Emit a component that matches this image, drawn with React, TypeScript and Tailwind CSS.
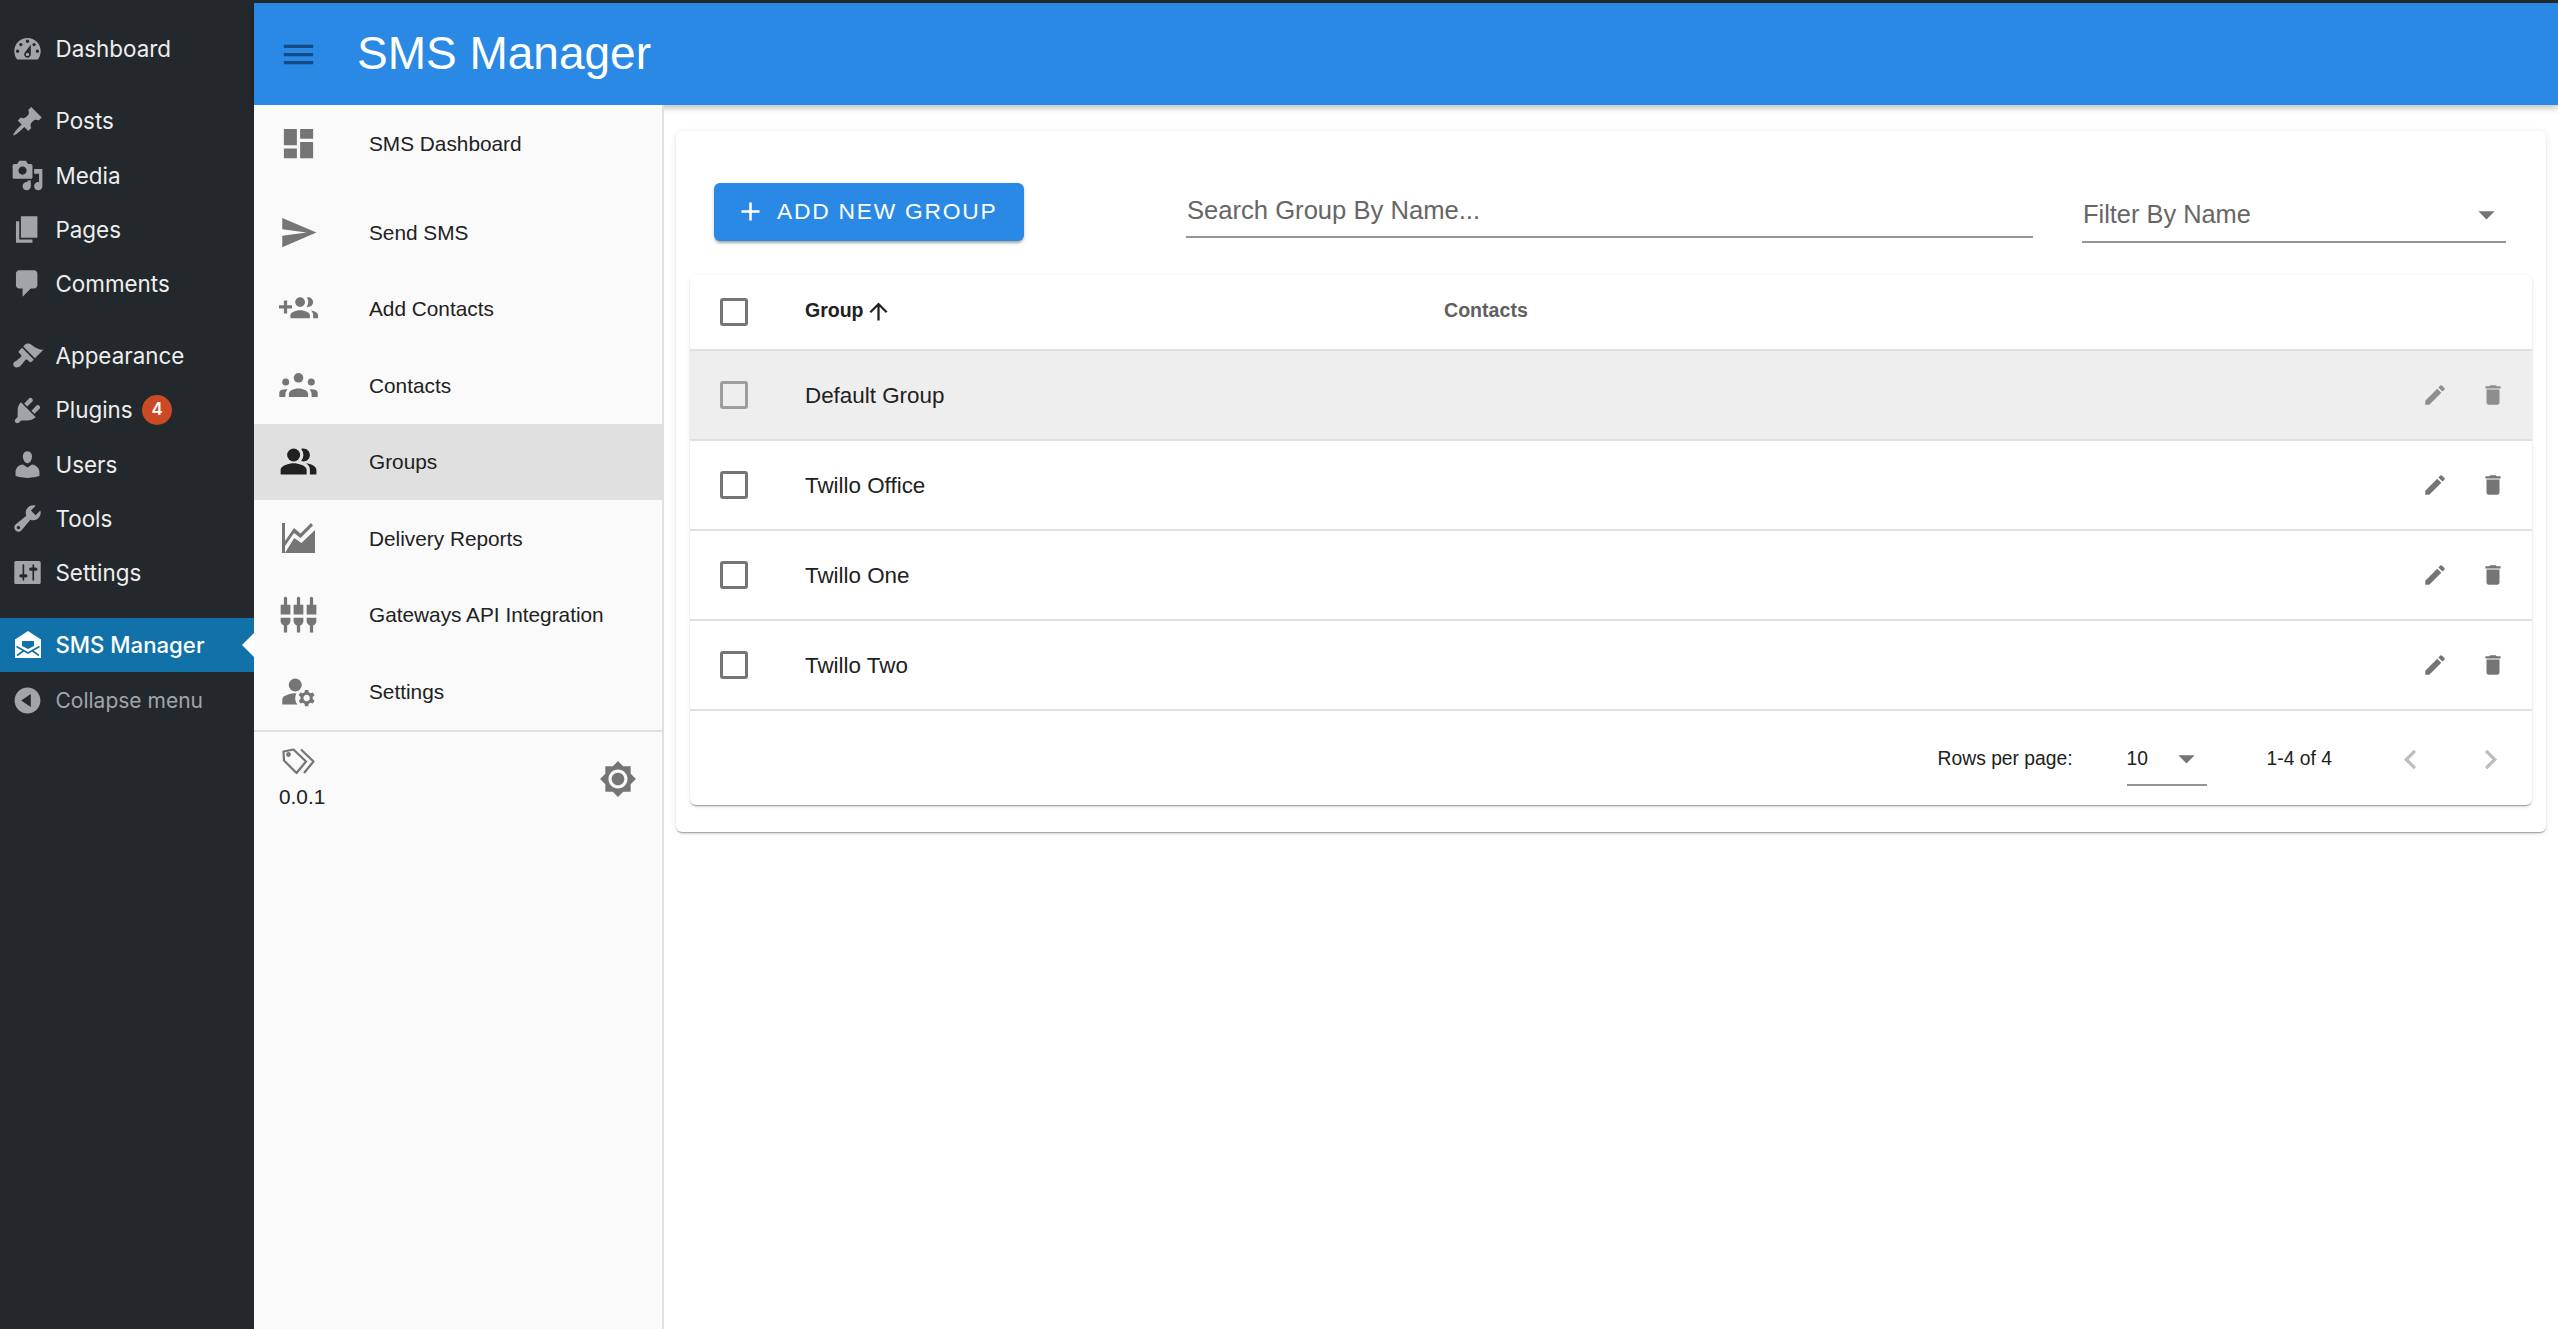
import {
  MdAdd,
  MdArrowDropDown,
  MdArrowUpward,
  MdBrightness7,
  MdChevronLeft,
  MdChevronRight,
  MdDashboard,
  MdDelete,
  MdEdit,
  MdManageAccounts,
  MdMenu,
  MdPeopleAlt,
  MdSend,
  MdSettingsInputComponent,
} from "react-icons/md";

const dashicons = {
  dashboard:
    "M3.76 16h12.48c1.1-1.37 1.76-3.11 1.76-5 0-4.42-3.58-8-8-8s-8 3.58-8 8c0 1.89.66 3.63 1.76 5zM10 4c.55 0 1 .45 1 1s-.45 1-1 1-1-.45-1-1 .45-1 1-1zM6 6c.55 0 1 .45 1 1s-.45 1-1 1-1-.45-1-1 .45-1 1-1zm8 0c.55 0 1 .45 1 1s-.45 1-1 1-1-.45-1-1 .45-1 1-1zm-5.37 5.55L12 7v6c0 1.1-.9 2-2 2s-2-.9-2-2c0-.57.24-1.08.63-1.45zM4 10c.55 0 1 .45 1 1s-.45 1-1 1-1-.45-1-1 .45-1 1-1zm12 0c.55 0 1 .45 1 1s-.45 1-1 1-1-.45-1-1 .45-1 1-1zm-5 3c0-.55-.45-1-1-1s-1 .45-1 1 .45 1 1 1 1-.45 1-1z",
  posts:
    "M10.44 3.02l1.82-1.82 6.36 6.35-1.83 1.82c-1.05-.68-2.48-.57-3.41.36l-.75.75c-.92.93-1.04 2.35-.35 3.41l-1.83 1.82-2.41-2.41-2.8 2.79c-.42.42-3.38 2.71-3.8 2.29s1.86-3.39 2.28-3.81l2.79-2.79L4.1 9.36l1.83-1.82c1.05.69 2.48.57 3.4-.36l.75-.75c.93-.92 1.05-2.35.36-3.41z",
  media:
    "M13 11V4c0-.55-.45-1-1-1h-1.67L9 1H5L3.67 3H2c-.55 0-1 .45-1 1v7c0 .55.45 1 1 1h10c.55 0 1-.45 1-1zM7 4.5c1.38 0 2.5 1.12 2.5 2.5S8.38 9.5 7 9.5 4.5 8.38 4.5 7 5.62 4.5 7 4.5zM14 6h5v10.5c0 1.38-1.12 2.5-2.5 2.5S14 17.88 14 16.5s1.12-2.5 2.5-2.5c.17 0 .34.02.5.05V9h-3V6zm-4 8.05V13h2v3.5c0 1.38-1.12 2.5-2.5 2.5S7 17.88 7 16.5 8.12 14 9.5 14c.17 0 .34.02.5.05z",
  pages: "M6 15V2h10v13H6zm-1 1h8v2H3V5h2v11z",
  comments:
    "M5 2h9c1.1 0 2 .9 2 2v7c0 1.1-.9 2-2 2h-2l-5 5v-5H5c-1.1 0-2-.9-2-2V4c0-1.1.9-2 2-2z",
  appearance:
    "M14.48 11.06L7.41 3.99l1.5-1.5c.5-.56 2.3-.47 3.51.32 1.21.8 1.43 1.28 2.91 2.1 1.18.64 2.45 1.26 4.45.85zm-.71.71L6.7 4.7 4.93 6.47c-.39.39-.39 1.02 0 1.41l1.06 1.06c.39.39.39 1.03 0 1.42-.6.6-1.43 1.11-2.21 1.69-.35.26-.7.53-1.01.84C1.43 13.23.91 15.04 1.96 16.09c1.05 1.05 2.86.53 4.2-.81.31-.31.58-.66.84-1.01.58-.78 1.09-1.61 1.69-2.21.39-.39 1.03-.39 1.42 0l1.06 1.06c.39.39 1.02.39 1.41 0z",
  plugins:
    "M13.11 4.36L9.87 7.6 8 5.73l3.24-3.24c.35-.34 1.05-.2 1.56.32.52.51.66 1.21.31 1.55zm-8 1.77l.91-1.12 9.01 9.01-1.19.84c-.71.71-2.63 1.16-3.82 1.16H6.14L4.9 17.26c-.59.59-1.54.59-2.12 0-.59-.58-.59-1.53 0-2.12l1.24-1.24v-3.88c0-1.13.4-3.19 1.09-3.89zm7.26 3.97l3.24-3.24c.34-.35 1.04-.21 1.55.31.52.51.66 1.21.31 1.55l-3.24 3.25z",
  users:
    "M10 9.25c-2.27 0-2.73-3.44-2.73-3.44C7 4.02 7.82 2 9.97 2c2.16 0 2.98 2.02 2.71 3.81 0 0-.41 3.44-2.68 3.44zm0 2.57L12.72 10c2.39 0 4.52 2.33 4.52 4.53v2.49s-3.65 1.13-7.24 1.13c-3.65 0-7.24-1.13-7.24-1.13v-2.49c0-2.25 1.94-4.48 4.47-4.48z",
  tools:
    "M16.68 9.77c-1.34 1.34-3.3 1.67-4.95.99l-5.41 6.52c-.99.99-2.59.99-3.58 0s-.99-2.59 0-3.57l6.52-5.42c-.68-1.65-.35-3.61.99-4.95 1.28-1.28 3.12-1.62 4.72-1.06l-2.89 2.89 2.82 2.82 2.86-2.87c.53 1.58.18 3.39-1.08 4.65zM3.81 16.21c.4.39 1.04.39 1.43 0 .4-.4.4-1.04 0-1.43-.39-.4-1.03-.4-1.43 0-.39.39-.39 1.03 0 1.43z",
  settings:
    "M18 16V4c0-.55-.45-1-1-1H3c-.55 0-1 .45-1 1v12c0 .55.45 1 1 1h14c.55 0 1-.45 1-1zM8 11h1c.55 0 1 .45 1 1s-.45 1-1 1H8v1.5c0 .28-.22.5-.5.5s-.5-.22-.5-.5V13H6c-.55 0-1-.45-1-1s.45-1 1-1h1V5.5c0-.28.22-.5.5-.5s.5.22.5.5V11zm5-2h-1c-.55 0-1-.45-1-1s.45-1 1-1h1V5.5c0-.28.22-.5.5-.5s.5.22.5.5V7h1c.55 0 1 .45 1 1s-.45 1-1 1h-1v5.5c0 .28-.22.5-.5.5s-.5-.22-.5-.5V9z",
  collapse:
    "M10 2.16c4.33 0 7.84 3.51 7.84 7.84s-3.51 7.84-7.84 7.84S2.16 14.33 2.16 10 5.71 2.16 10 2.16zm2 11.72V6.12L6.18 9.97z",
};

const Dashicon = ({ d }: { d: string }) => (
  <svg viewBox="0 0 20 20" className="w-[33px] h-[33px] fill-current shrink-0">
    <path d={d} />
  </svg>
);

const EnvelopeIcon = () => (
  <svg viewBox="0 0 26 27" className="w-[26px] h-[27px] mx-[3.5px] shrink-0">
    <path d="M13 0L26 8.5V27H0V8.5z" fill="#fff" />
    <path d="M7 10H19V15L13 18L7 15z" fill="#1072a8" />
    <path d="M1.5 15.5L13 22L24.5 15.5M2 24.5L9 19.5M24 24.5L17 19.5" stroke="#1072a8" strokeWidth="1.6" fill="none" />
  </svg>
);

const DeliveryIcon = () => (
  <svg viewBox="0 0 33 30" className="w-[33px] h-[30px] fill-current">
    <path d="M0 0H3V30H0z" />
    <path d="M3 18L12 5L18.5 10.5L29 0L31 2.5L18.5 15L12 10L3 23z" />
    <path d="M3 30L12.2 15L19.5 20L33 7V30z" />
  </svg>
);

const AddContactsIcon = () => (
  <svg viewBox="0 0 24 24" className="w-[39px] h-[39px] fill-current">
    <path d="M8 10H5V7H3v3H0v2h3v3h2v-3h3v-2zm10 1c1.66 0 2.99-1.34 2.99-3S19.66 5 18 5c-.32 0-.63.05-.91.14.57.81.9 1.79.9 2.86s-.34 2.04-.9 2.86c.28.09.59.14.91.14zm-5 0c1.66 0 2.99-1.34 2.99-3S14.66 5 13 5s-3 1.34-3 3 1.34 3 3 3zm6.62 2.16c.83.73 1.38 1.66 1.38 2.84v2h3v-2c0-1.54-2.37-2.49-4.38-2.84zM13 13c-2 0-6 1-6 3v2h12v-2c0-2-4-3-6-3z" />
  </svg>
);

const ContactsIcon = () => (
  <svg viewBox="0 0 24 15" className="w-[39px] h-[24px] fill-current">
    <circle cx="12" cy="3" r="3" />
    <circle cx="4" cy="5.6" r="2.2" />
    <circle cx="20" cy="5.6" r="2.2" />
    <path d="M6 15v-1.6c0-1.2.7-2.3 1.8-2.7C9 10.1 10.4 9.7 12 9.7s3 .4 4.2 1c1.1.4 1.8 1.5 1.8 2.7V15z" />
    <path d="M5.1 10.2c-.4-.1-.7-.1-1.1-.1-1 0-1.9.2-2.8.6C.5 11 0 11.7 0 12.5V15h3.8v-2c0-.8.9-2.1 1.3-2.8z" />
    <path d="M18.9 10.2c.4-.1.7-.1 1.1-.1 1 0 1.9.2 2.8.6.7.3 1.2 1 1.2 1.8V15h-3.8v-2c0-.8-.9-2.1-1.3-2.8z" />
  </svg>
);

const TagsIcon = () => (
  <svg
    viewBox="0 0 33 27"
    className="w-[33px] h-[27px] ml-[4px]"
    fill="none"
    stroke="#757575"
    strokeWidth="2.2"
    strokeLinejoin="round"
  >
    <path d="M1.5 3.5L11.5 1.5L24 13.5L14.5 25L2 12.5z" />
    <path d="M19 1.5L31.5 13.5L22 25" />
    <circle cx="6.5" cy="6.5" r="1.3" />
  </svg>
);

const wpTop = [
  { label: "Posts", icon: dashicons.posts },
  { label: "Media", icon: dashicons.media },
  { label: "Pages", icon: dashicons.pages },
  { label: "Comments", icon: dashicons.comments },
];

const wpMid = [
  { label: "Appearance", icon: dashicons.appearance },
  { label: "Plugins", icon: dashicons.plugins, badge: 4 },
  { label: "Users", icon: dashicons.users },
  { label: "Tools", icon: dashicons.tools },
  { label: "Settings", icon: dashicons.settings },
];

const WpItem = ({ label, icon, badge }: { label: string; icon: string; badge?: number }) => (
  <div className="h-[54.2px] flex items-center pl-[11px] gap-[11.5px] text-[#a0a5aa]">
    <Dashicon d={icon} />
    <span className="text-[#eeeeee] text-[22.4px]">{label}</span>
    {badge && (
      <span className="ml-[-2px] w-[30px] h-[30px] rounded-full bg-[#ca4a26] text-white text-[17px] font-semibold flex items-center justify-center">
        {badge}
      </span>
    )}
  </div>
);

const drawerItems = [
  { label: "Add Contacts", icon: <AddContactsIcon /> },
  { label: "Contacts", icon: <ContactsIcon /> },
  { label: "Groups", icon: <MdPeopleAlt size={39} className="text-[#212121]" />, active: true },
  { label: "Delivery Reports", icon: <DeliveryIcon /> },
  { label: "Gateways API Integration", icon: <MdSettingsInputComponent size={39} /> },
  { label: "Settings", icon: <MdManageAccounts size={39} /> },
];

const DrawerRow = ({ label, icon, active }: { label: string; icon: React.ReactNode; active?: boolean }) => (
  <div className={`h-[76.5px] flex items-center ${active ? "bg-[#e0e0e0]" : ""}`}>
    <div className="w-[88px] mr-[27px] flex justify-center text-[#757575] shrink-0">{icon}</div>
    <span className="text-[20.8px] text-[#212121]">{label}</span>
  </div>
);

const groups = ["Default Group", "Twillo Office", "Twillo One", "Twillo Two"];

const App = () => {
  return (
    <div className="w-full h-screen flex overflow-hidden bg-white font-['Liberation_Sans',sans-serif]">
      <aside className="w-[254px] shrink-0 bg-[#23282d] pt-[22px] flex flex-col font-['Inter',sans-serif]">
        <WpItem label="Dashboard" icon={dashicons.dashboard} />
        <div className="mt-[18px]">
          {wpTop.map((item) => (
            <WpItem key={item.label} {...item} />
          ))}
        </div>
        <div className="mt-[18px]">
          {wpMid.map((item) => (
            <WpItem key={item.label} {...item} />
          ))}
        </div>
        <div className="mt-[18px] h-[54px] bg-[#1072a8] flex items-center pl-[11px] gap-[11.5px] relative">
          <EnvelopeIcon />
          <span className="text-white text-[22.2px] font-medium">SMS Manager</span>
          <span className="absolute right-0 top-[15px] w-0 h-0 border-y-[12px] border-y-transparent border-r-[12px] border-r-white" />
        </div>
        <div className="mt-[2px] h-[54px] flex items-center pl-[11px] gap-[11.5px] text-[#a0a5aa]">
          <Dashicon d={dashicons.collapse} />
          <span className="text-[21px]">Collapse menu</span>
        </div>
      </aside>

      <div className="flex-1 flex flex-col min-w-0">
        <div className="h-[3px] bg-[#23282d] shrink-0" />
        <header className="h-[102px] bg-[#2a89e4] shrink-0 flex items-center pl-[25px] shadow-[0_3px_6px_rgba(0,0,0,0.25)] relative">
          <MdMenu size={39} className="text-[#114a84]" />
          <h1 className="ml-[39px] text-white text-[46px] leading-none pb-[3px]">SMS Manager</h1>
        </header>

        <div className="flex-1 flex min-h-0">
          <nav className="w-[410px] shrink-0 bg-[#fafafa] border-r-2 border-[#e0e0e0] flex flex-col relative">
            <div className="h-[77px] flex items-center">
              <div className="w-[88px] mr-[27px] flex justify-center text-[#757575] shrink-0">
                <MdDashboard size={39} />
              </div>
              <span className="text-[20.8px] text-[#212121]">SMS Dashboard</span>
            </div>
            <div className="h-[76.5px] mt-[12px] flex items-center">
              <div className="w-[88px] mr-[27px] flex justify-center text-[#757575] shrink-0">
                <MdSend size={39} />
              </div>
              <span className="text-[20.8px] text-[#212121]">Send SMS</span>
            </div>
            {drawerItems.map((item) => (
              <DrawerRow key={item.label} {...item} />
            ))}
            <div className="border-t-2 border-[#e0e0e0] flex justify-between pl-[24px] pr-[25px] pt-[16px]">
              <div className="flex flex-col">
                <TagsIcon />
                <span className="text-[20.8px] text-[#212121] mt-[6px] ml-[1px]">0.0.1</span>
              </div>
              <MdBrightness7 size={38} className="text-[#757575] mt-[12px]" />
            </div>
          </nav>

          <main className="flex-1 pl-[12px] pr-[12px] pt-[26px] min-w-0">
            <div className="h-[701px] rounded-[6px] bg-white shadow-[0_2px_2px_-1px_rgba(0,0,0,0.3),0_1px_1px_rgba(0,0,0,0.1),0_1px_6px_rgba(0,0,0,0.1)] flex flex-col">
              <div className="h-[144px] shrink-0 pl-[38px] flex items-start">
                <button className="mt-[52px] w-[310px] h-[58px] rounded-[6px] bg-[#2a89e4] text-white flex items-center pl-[22px] pb-[1px] shadow-[0_3px_3px_-1px_rgba(0,0,0,0.3),0_1px_4px_rgba(0,0,0,0.12)]">
                  <MdAdd size={31} className="mr-[11px] ml-[-1px]" />
                  <span className="text-[22.8px] tracking-[1.75px] font-medium">ADD NEW GROUP</span>
                </button>
                <div className="mt-[52px] ml-[162px] w-[847px] h-[55px] border-b-2 border-[#949494] flex items-center pl-[1px] pt-[2px]">
                  <span className="text-[25.6px] text-[#666666]">Search Group By Name...</span>
                </div>
                <div className="mt-[56px] ml-[49px] w-[424px] h-[56px] border-b-[2px] border-[#949494] flex items-center justify-between pl-[1px]">
                  <span className="text-[25.4px] text-[#666666] pt-[1px]">Filter By Name</span>
                  <MdArrowDropDown size={39} className="text-[#757575]" />
                </div>
              </div>

              <div className="mx-[14px] h-[530px] rounded-[6px] bg-white shadow-[0_2px_2px_-1px_rgba(0,0,0,0.35),0_1px_1px_rgba(0,0,0,0.1),0_1px_5px_rgba(0,0,0,0.08)] flex flex-col">
                <div className="h-[76px] shrink-0 border-b-2 border-[#e0e0e0] flex items-center pb-[2px]">
                  <span className="ml-[30px] w-[28px] h-[28px] rounded-[3px] border-[3px] border-[#757575] mt-[2px]" />
                  <div className="ml-[57px] w-[639px] flex items-center">
                    <span className="text-[19.5px] font-bold text-[#212121]">Group</span>
                    <MdArrowUpward size={27} className="text-[#212121] ml-[1px] mt-[1px]" />
                  </div>
                  <span className="text-[19.6px] font-bold text-[#616161]">Contacts</span>
                </div>
                {groups.map((name, i) => (
                  <div
                    key={name}
                    className={`h-[90px] shrink-0 border-b-2 border-[#e0e0e0] flex items-center ${
                      i === 0 ? "bg-[#eeeeee]" : ""
                    }`}
                  >
                    <span
                      className={`ml-[30px] w-[28px] h-[28px] rounded-[3px] border-[3px] ${
                        i === 0 ? "border-[#9e9e9e]" : "border-[#757575]"
                      }`}
                    />
                    <span className="ml-[57px] flex-1 text-[22.4px] text-[#212121] pt-[2px]">{name}</span>
                    <div className={`flex gap-[32px] pr-[26px] ${i === 0 ? "text-[#8e8e8e]" : "text-[#757575]"}`}>
                      <MdEdit size={26} />
                      <MdDelete size={26} />
                    </div>
                  </div>
                ))}
                <div className="flex-1 flex items-center justify-end text-[19.3px] text-[#212121] pt-[3px]">
                  <span>Rows per page:</span>
                  <div className="ml-[54px] w-[80px] h-[53px] border-b-2 border-[#949494] flex items-center justify-between pr-[1px]">
                    <span className="pt-[1px]">10</span>
                    <MdArrowDropDown size={39} className="text-[#757575]" />
                  </div>
                  <span className="ml-[60px]">1-4 of 4</span>
                  <div className="ml-[59px] mr-[22px] flex gap-[41px] text-[#bdbdbd]">
                    <MdChevronLeft size={39} />
                    <MdChevronRight size={39} />
                  </div>
                </div>
              </div>
            </div>
          </main>
        </div>
      </div>
    </div>
  );
};

export default App;
